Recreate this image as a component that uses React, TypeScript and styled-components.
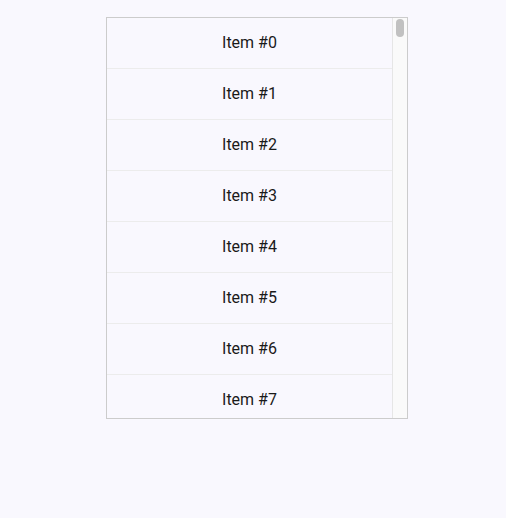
import React from "react";
import styled, { createGlobalStyle } from "styled-components";

const GlobalStyle = createGlobalStyle`
  html, body {
    margin: 0;
    padding: 0;
    background: #f9f8fe;
    font-family: Roboto, "Liberation Sans", sans-serif;
  }
`;

const Page = styled.div`
  padding: 17px 0 0 106px;
`;

const ListBox = styled.div`
  width: 300px;
  height: 400px;
  border: 1px solid #cccccc;
  display: flex;
  overflow: hidden;
`;

const ListArea = styled.div`
  flex: 1;
  overflow: hidden;
`;

const Row = styled.div`
  box-sizing: border-box;
  height: 51px;
  padding-bottom: 2px;
  display: flex;
  align-items: center;
  justify-content: center;
  border-bottom: 1px solid #ececec;
  font-size: 16px;
  color: #1a1a1a;
`;

const ScrollTrack = styled.div`
  position: relative;
  width: 14px;
  flex-shrink: 0;
  background: #fafafa;
  border-left: 1px solid #e6e6e6;
`;

const ScrollThumb = styled.div`
  position: absolute;
  top: 1px;
  left: 3px;
  width: 8px;
  height: 18px;
  border-radius: 4px;
  background: #c1c1c1;
`;

const items = Array.from({ length: 8 }, (_, i) => `Item #${i}`);

export default function App() {
  return (
    <>
      <GlobalStyle />
      <Page>
        <ListBox>
          <ListArea>
            {items.map((label) => (
              <Row key={label}>{label}</Row>
            ))}
          </ListArea>
          <ScrollTrack>
            <ScrollThumb />
          </ScrollTrack>
        </ListBox>
      </Page>
    </>
  );
}
